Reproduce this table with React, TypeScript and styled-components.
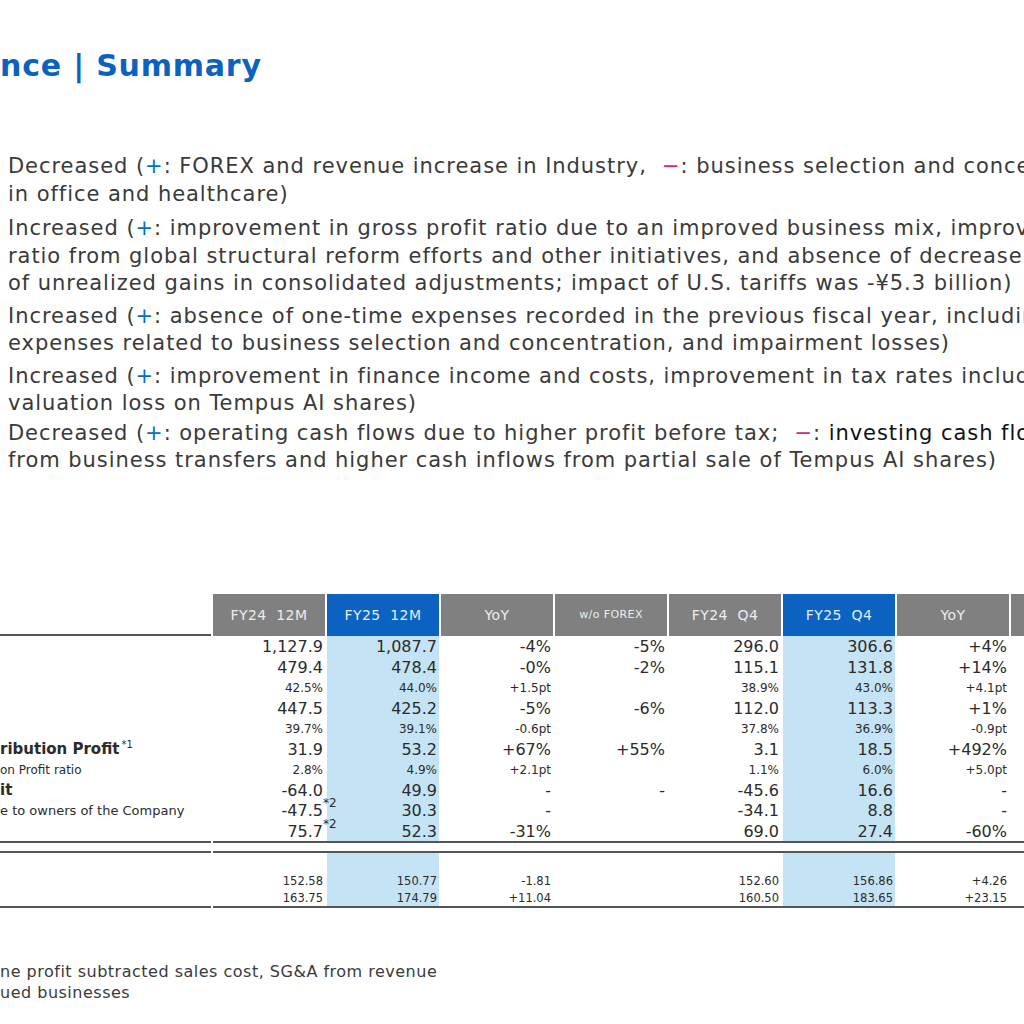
import React from 'react';
import styled, { createGlobalStyle } from 'styled-components';

const GlobalStyle = createGlobalStyle`
  html, body {
    margin: 0;
    padding: 0;
    background: #ffffff;
    overflow: hidden;
  }
  body {
    font-family: "DejaVu Sans", Verdana, "Noto Sans", sans-serif;
    color: #3a3a3a;
  }
`;

const Page = styled.div`
  width: 1024px;
  height: 1024px;
  overflow: hidden;
  padding-top: 48px;
  box-sizing: border-box;
`;

const Title = styled.h1`
  margin: 0;
  font-size: 30px;
  line-height: 36px;
  letter-spacing: 0.8px;
  font-weight: bold;
  color: #0b62c0;
  white-space: pre;
`;

const Bullets = styled.ul`
  margin: 69px 0 0 8px;
  padding: 0;
  list-style: none;
`;

const Bullet = styled.li<{ $gap?: number }>`
  margin-top: ${p => p.$gap ?? 0}px;
  font-size: 21px;
  line-height: 27.5px;
  letter-spacing: 0.95px;
  white-space: pre;
`;

const Plus = styled.span`
  color: #0070c0;
`;

const Minus = styled.span`
  color: #d0287c;
`;

const Dark = styled.span`
  color: #111111;
`;

const Table = styled.div`
  margin-top: 119px;
  display: grid;
  grid-template-columns: 211px repeat(8, 112px);
  column-gap: 2px;
  width: max-content;
`;

const HeadCell = styled.div<{ $tone: 'gray' | 'blue' | 'none'; $small?: boolean }>`
  height: 42px;
  display: flex;
  align-items: center;
  justify-content: center;
  font-size: ${p => (p.$small ? '11px' : '14px')};
  letter-spacing: 0.4px;
  white-space: pre;
  color: ${p => (p.$tone === 'blue' ? '#e3edf8' : '#ececec')};
  background: ${p => (p.$tone === 'blue' ? '#0b62c0' : p.$tone === 'gray' ? '#808080' : 'transparent')};
  box-sizing: border-box;
  ${p => (p.$tone === 'none' ? 'border-bottom: 2px solid #555;' : '')}
`;

type Size = 'lg' | 'sm' | 'xs' | 'gap';

const rowHeight: Record<Size, string> = { lg: '20.5px', sm: '20.5px', xs: '17px', gap: '19px' };
const fontSize: Record<Size, string> = { lg: '16px', sm: '12px', xs: '11.5px', gap: '12px' };

const Cell = styled.div<{ $size: Size; $tint?: boolean }>`
  box-sizing: border-box;
  height: ${p => rowHeight[p.$size]};
  padding: 2px 2px 0 0;
  display: flex;
  align-items: center;
  justify-content: flex-end;
  font-size: ${p => fontSize[p.$size]};
  color: #2b2b2b;
  white-space: nowrap;
  background: ${p => (p.$tint ? '#c4e3f4' : 'transparent')};
`;

const LabelCell = styled.div<{ $size: Size; $bold?: boolean; $font?: number }>`
  box-sizing: border-box;
  height: ${p => rowHeight[p.$size]};
  padding-top: 2px;
  display: flex;
  align-items: center;
  font-size: ${p => (p.$font ? `${p.$font}px` : fontSize[p.$size])};
  font-weight: ${p => (p.$bold ? 'bold' : 'normal')};
  color: #2b2b2b;
  white-space: nowrap;
  overflow: hidden;
`;

const Num = styled.span`
  position: relative;
`;

const HangSup = styled.span`
  position: absolute;
  left: 100%;
  top: -5px;
  font-size: 12px;
`;

const LabelSup = styled.span`
  align-self: flex-start;
  font-size: 10px;
  font-weight: normal;
  margin-left: 2px;
  margin-top: -1px;
`;

const Rule = styled.div<{ $double?: boolean; $wide?: boolean }>`
  grid-column: ${p => (p.$wide ? '2 / -1' : '1 / 2')};
  box-sizing: border-box;
  height: ${p => (p.$double ? '12px' : '2px')};
  border-top: 2px solid #555;
  ${p => (p.$double ? 'border-bottom: 2px solid #555;' : '')}
`;

const Footnotes = styled.div`
  margin-top: 53px;
  font-size: 16px;
  line-height: 21px;
  letter-spacing: 0.5px;
  color: #3a3a3a;
  white-space: pre;
`;

const headers = [
  { text: 'FY24  12M', tone: 'gray' },
  { text: 'FY25  12M', tone: 'blue' },
  { text: 'YoY', tone: 'gray' },
  { text: 'w/o FOREX', tone: 'gray', small: true },
  { text: 'FY24  Q4', tone: 'gray' },
  { text: 'FY25  Q4', tone: 'blue' },
  { text: 'YoY', tone: 'gray' },
  { text: '', tone: 'gray' },
] as const;

const tinted = [1, 5];

type Row = {
  size: Size;
  label?: string;
  bold?: boolean;
  labelFont?: number;
  labelSup?: string;
  hang?: string;
  cells: string[];
};

const upperRows: Row[] = [
  { size: 'lg', cells: ['1,127.9', '1,087.7', '-4%', '-5%', '296.0', '306.6', '+4%', ''] },
  { size: 'lg', cells: ['479.4', '478.4', '-0%', '-2%', '115.1', '131.8', '+14%', ''] },
  { size: 'sm', cells: ['42.5%', '44.0%', '+1.5pt', '', '38.9%', '43.0%', '+4.1pt', ''] },
  { size: 'lg', cells: ['447.5', '425.2', '-5%', '-6%', '112.0', '113.3', '+1%', ''] },
  { size: 'sm', cells: ['39.7%', '39.1%', '-0.6pt', '', '37.8%', '36.9%', '-0.9pt', ''] },
  { size: 'lg', label: 'ribution Profit', bold: true, labelFont: 15, labelSup: '*1', cells: ['31.9', '53.2', '+67%', '+55%', '3.1', '18.5', '+492%', ''] },
  { size: 'sm', label: 'on Profit ratio', cells: ['2.8%', '4.9%', '+2.1pt', '', '1.1%', '6.0%', '+5.0pt', ''] },
  { size: 'lg', label: 'it', bold: true, labelFont: 15, cells: ['-64.0', '49.9', '-', '-', '-45.6', '16.6', '-', ''] },
  { size: 'lg', label: 'e to owners of the Company', labelFont: 13, hang: '*2', cells: ['-47.5', '30.3', '-', '', '-34.1', '8.8', '-', ''] },
  { size: 'lg', hang: '*2', cells: ['75.7', '52.3', '-31%', '', '69.0', '27.4', '-60%', ''] },
];

const lowerRows: Row[] = [
  { size: 'gap', cells: ['', '', '', '', '', '', '', ''] },
  { size: 'xs', cells: ['152.58', '150.77', '-1.81', '', '152.60', '156.86', '+4.26', ''] },
  { size: 'xs', cells: ['163.75', '174.79', '+11.04', '', '160.50', '183.65', '+23.15', ''] },
];

const renderRow = (row: Row, idx: number) => (
  <React.Fragment key={idx}>
    <LabelCell $size={row.size} $bold={row.bold} $font={row.labelFont}>
      {row.label}
      {row.labelSup && <LabelSup>{row.labelSup}</LabelSup>}
    </LabelCell>
    {row.cells.map((value, i) => (
      <Cell key={i} $size={row.size} $tint={tinted.includes(i)}>
        <Num>
          {value}
          {i === 0 && row.hang && <HangSup>{row.hang}</HangSup>}
        </Num>
      </Cell>
    ))}
  </React.Fragment>
);

const App: React.FC = () => (
  <Page>
    <GlobalStyle />
    <Title>nce | Summary</Title>

    <Bullets>
      <Bullet>
        Decreased (<Plus>+</Plus>: FOREX and revenue increase in Industry,  <Minus>−</Minus>: business selection and concentration
        {'\n'}in office and healthcare)
      </Bullet>
      <Bullet $gap={7}>
        Increased (<Plus>+</Plus>: improvement in gross profit ratio due to an improved business mix, improvement in SG&amp;A
        {'\n'}ratio from global structural reform efforts and other initiatives, and absence of decrease in
        {'\n'}of unrealized gains in consolidated adjustments; impact of U.S. tariffs was -¥5.3 billion)
      </Bullet>
      <Bullet $gap={5}>
        Increased (<Plus>+</Plus>: absence of one-time expenses recorded in the previous fiscal year, including
        {'\n'}expenses related to business selection and concentration, and impairment losses)
      </Bullet>
      <Bullet $gap={5}>
        Increased (<Plus>+</Plus>: improvement in finance income and costs, improvement in tax rates including
        {'\n'}valuation loss on Tempus AI shares)
      </Bullet>
      <Bullet $gap={2}>
        Decreased (<Plus>+</Plus>: operating cash flows due to higher profit before tax;  <Minus>−</Minus>: <Dark>investing cash flows</Dark>
        {'\n'}from business transfers and higher cash inflows from partial sale of Tempus AI shares)
      </Bullet>
    </Bullets>

    <Table>
      <HeadCell $tone="none" />
      {headers.map((h, i) => (
        <HeadCell key={i} $tone={h.tone} $small={'small' in h}>
          {h.text}
        </HeadCell>
      ))}

      {upperRows.map(renderRow)}

      <Rule $double />
      <Rule $double $wide />

      {lowerRows.map((row, i) => renderRow(row, i + 100))}

      <Rule />
      <Rule $wide />
    </Table>

    <Footnotes>
      ne profit subtracted sales cost, SG&amp;A from revenue
      {'\n'}ued businesses
    </Footnotes>
  </Page>
);

export default App;
